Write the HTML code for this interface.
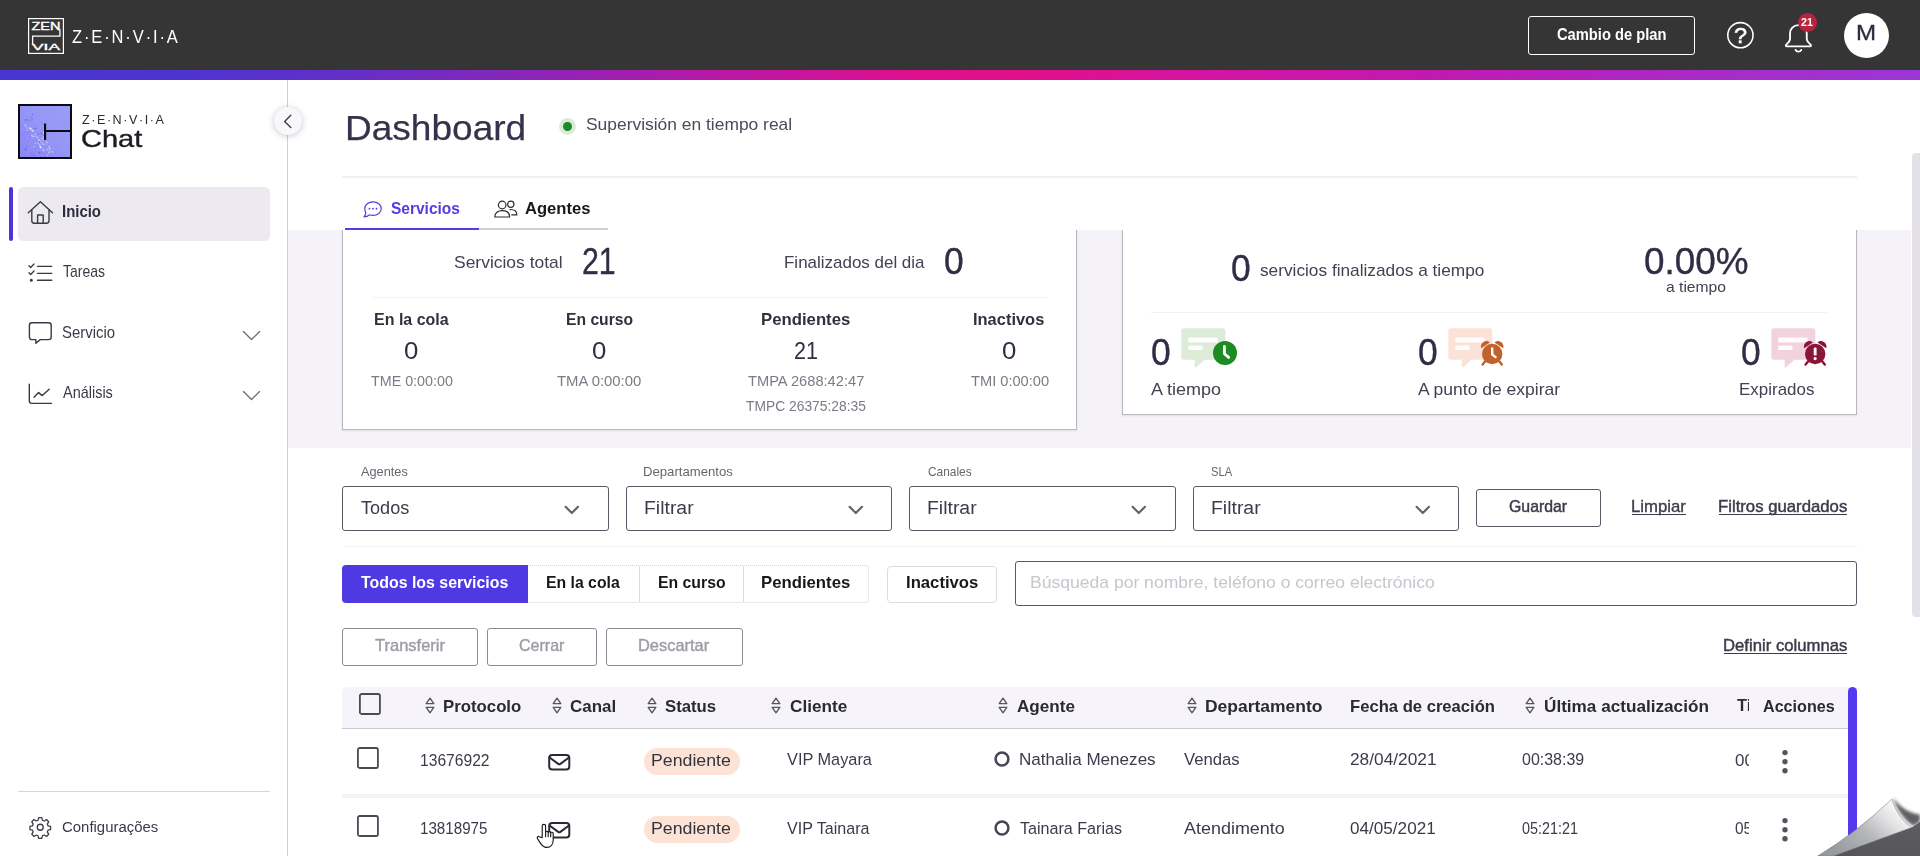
<!DOCTYPE html>
<html lang="es">
<head>
<meta charset="utf-8">
<title>Zenvia Chat - Dashboard</title>
<style>
*{box-sizing:border-box;margin:0;padding:0}
html,body{width:1920px;height:856px;overflow:hidden;background:#fff}
body{font-family:"Liberation Sans",sans-serif;color:#33334a}
#app{position:relative;width:1920px;height:856px;overflow:hidden;background:#fff}
.t{position:absolute;white-space:nowrap;line-height:1;transform-origin:0 0;display:block}
.b{position:absolute}
svg{position:absolute;overflow:visible}
header,aside,main,section,nav{position:absolute;left:0;top:0;width:0;height:0}

</style>
</head>
<body>
<div id="app">
<header>
<div class="b" style="left:0px;top:0px;width:1920px;height:70px;background:#363535"></div>
<div class="b" style="left:0px;top:70px;width:1920px;height:10px;background:linear-gradient(90deg,#4936d2 0%,#4d34d0 9%,#6030c8 17%,#7f28bd 25%,#b21aa8 36%,#dc1090 47%,#e20f8a 53%,#d414a0 62%,#c01ab0 75%,#a92ac6 88%,#9a37d6 100%)"></div>
<svg style="left:28px;top:18px" width="36" height="36" viewBox="0 0 36 36" fill="none" stroke="#fff">
<rect x="0.600" y="0.600" width="34.800" height="34.800" stroke-width="1.200"/>
<path d="M31.900 11v7.100H4.600v8.400" stroke-width="1.300"/>
<text x="3.400" y="11.500" font-family="Liberation Sans, sans-serif" font-size="10.400" fill="#fff" stroke="#fff" stroke-width=".35" textLength="29" lengthAdjust="spacingAndGlyphs">ZEN</text>
<text x="4" y="32.300" font-family="Liberation Sans, sans-serif" font-size="8.800" fill="#fff" stroke="#fff" stroke-width=".35" textLength="28" lengthAdjust="spacingAndGlyphs">VIA</text>
</svg>
<span class="t" style="left:72.00px;top:28.59px;font-size:17.5px;color:#fff;letter-spacing:2px;transform:scaleX(0.9421);">Z·E·N·V·I·A</span>
<div class="b" style="left:1528px;top:16px;width:167px;height:39px;border:1px solid #fff;border-radius:3px"></div>
<span class="t" style="left:1557.00px;top:26.12px;font-size:16.4px;font-weight:700;color:#fff;transform:scaleX(0.8971);">Cambio de plan</span>
<svg style="left:1726px;top:21px" width="29" height="29" viewBox="0 0 29 29" fill="none" stroke="#fff" stroke-width="1.6"><circle cx="14.4" cy="14.2" r="12.6"/></svg>
<span class="t" style="left:1734.46px;top:24.78px;font-size:22px;color:#fff;transform:scaleX(1.0676);-webkit-text-stroke:0.5px #fff;">?</span>
<svg style="left:1783px;top:23px" width="33" height="32" viewBox="0 0 30 32" preserveAspectRatio="none" fill="none" stroke="#fff" stroke-width="1.7" stroke-linecap="round" stroke-linejoin="round">
<path d="M14 2.2c-4.6 0-7.6 3.6-7.6 8.2v5.2c0 2.4-1.6 4.4-3.6 6.2-.5.5-.2 1.6.7 1.6h21c.9 0 1.2-1.1.7-1.6-2-1.800-3.600-3.800-3.600-6.200v-5.200c0-4.600-3-8.200-7.600-8.200z"/>
<path d="M11.400 26.800c.5 1.200 1.500 1.900 2.600 1.900s2.100-.7 2.600-1.900"/>
</svg>
<div class="b" style="left:1797.5px;top:12.5px;width:19.5px;height:19.5px;background:#b8233e;border-radius:50%"></div>
<span class="t" style="left:1801.00px;top:17.29px;font-size:11px;font-weight:700;color:#fff;transform:scaleX(0.9644);">21</span>
<div class="b" style="left:1844px;top:12.7px;width:45px;height:45px;background:#fff;border-radius:50%"></div>
<span class="t" style="left:1855.69px;top:22.00px;font-size:22.2px;color:#2b2b42;transform:scaleX(1.0863);-webkit-text-stroke:0.3px #2b2b42;">M</span>
</header>
<aside>
<div class="b" style="left:287px;top:80px;width:1px;height:776px;background:#d0ced6;z-index:4"></div>
<div class="b" style="left:18px;top:104px;width:54px;height:55px;background:#9595f6;border:2px solid #0c0c10"></div>
<svg style="left:20px;top:106px" width="50" height="51" viewBox="0 0 50 51">
<defs><linearGradient id="lg" x1="0" y1="1" x2="1" y2="0"><stop offset="0" stop-color="#8a86f4"/><stop offset=".5" stop-color="#9595f6"/><stop offset="1" stop-color="#9a9cf8"/></linearGradient></defs>
<rect width="50" height="51" fill="url(#lg)"/>
<rect x="17.5" y="30.6" width="1" height="1.2" fill="#e9f3e2" opacity="0.85" transform="rotate(38 17.5 30.6)"/><rect x="22.9" y="33.9" width="1" height="1" fill="#f3f7e6" opacity="0.55" transform="rotate(38 22.9 33.9)"/><rect x="11.7" y="24.1" width="2.4" height="0.8" fill="#dfeaf5" opacity="0.55" transform="rotate(38 11.7 24.1)"/><rect x="13.9" y="39.9" width="1" height="1.2" fill="#dfeaf5" opacity="0.85" transform="rotate(38 13.9 39.9)"/><rect x="13.0" y="29.0" width="2.4" height="1.2" fill="#dfeaf5" opacity="0.55" transform="rotate(38 13.0 29.0)"/><rect x="19.0" y="32.8" width="2.4" height="1.2" fill="#e9f3e2" opacity="0.55" transform="rotate(38 19.0 32.8)"/><rect x="17.9" y="36.3" width="1.6" height="1" fill="#c4ccff" opacity="0.95" transform="rotate(38 17.9 36.3)"/><rect x="15.7" y="30.1" width="1.2" height="0.8" fill="#c4ccff" opacity="0.85" transform="rotate(38 15.7 30.1)"/><rect x="23.3" y="29.9" width="1.6" height="1.2" fill="#e9f3e2" opacity="0.55" transform="rotate(38 23.3 29.9)"/><rect x="20.8" y="35.2" width="2" height="1" fill="#e9f3e2" opacity="0.55" transform="rotate(38 20.8 35.2)"/><rect x="19.5" y="38.0" width="1.6" height="1" fill="#cfd8ff" opacity="0.95" transform="rotate(38 19.5 38.0)"/><rect x="15.0" y="36.5" width="1.6" height="1" fill="#e9f3e2" opacity="0.55" transform="rotate(38 15.0 36.5)"/><rect x="23.0" y="43.3" width="2" height="1" fill="#f3f7e6" opacity="0.85" transform="rotate(38 23.0 43.3)"/><rect x="5.7" y="18.1" width="1" height="1" fill="#e9f3e2" opacity="0.7" transform="rotate(38 5.7 18.1)"/><rect x="27.1" y="42.5" width="2" height="1" fill="#e9f3e2" opacity="0.7" transform="rotate(38 27.1 42.5)"/><rect x="11.5" y="29.0" width="2" height="1.2" fill="#cfd8ff" opacity="0.95" transform="rotate(38 11.5 29.0)"/><rect x="29.4" y="44.9" width="1.2" height="0.8" fill="#e9f3e2" opacity="0.7" transform="rotate(38 29.4 44.9)"/><rect x="10.4" y="21.3" width="2.4" height="0.8" fill="#cfd8ff" opacity="0.85" transform="rotate(38 10.4 21.3)"/><rect x="4.4" y="18.5" width="2.4" height="1" fill="#dfeaf5" opacity="0.55" transform="rotate(38 4.4 18.5)"/><rect x="23.4" y="25.8" width="2.4" height="1" fill="#f3f7e6" opacity="0.95" transform="rotate(38 23.4 25.8)"/><rect x="13.2" y="29.6" width="1.2" height="0.8" fill="#dfeaf5" opacity="0.95" transform="rotate(38 13.2 29.6)"/><rect x="10.3" y="22.9" width="1" height="1.2" fill="#dfeaf5" opacity="0.55" transform="rotate(38 10.3 22.9)"/><rect x="28.9" y="45.7" width="1.2" height="1.2" fill="#f3f7e6" opacity="0.7" transform="rotate(38 28.9 45.7)"/><rect x="26.4" y="35.5" width="2" height="0.8" fill="#e9f3e2" opacity="0.95" transform="rotate(38 26.4 35.5)"/><rect x="27.2" y="48.5" width="1" height="0.8" fill="#e9f3e2" opacity="0.85" transform="rotate(38 27.2 48.5)"/><rect x="19.9" y="40.6" width="2.4" height="0.8" fill="#dfeaf5" opacity="0.85" transform="rotate(38 19.9 40.6)"/><rect x="9.8" y="21.4" width="2.4" height="1" fill="#e9f3e2" opacity="0.85" transform="rotate(38 9.8 21.4)"/><rect x="22.0" y="31.5" width="1.2" height="1.2" fill="#c4ccff" opacity="0.85" transform="rotate(38 22.0 31.5)"/><rect x="18.0" y="33.3" width="1.2" height="0.8" fill="#f3f7e6" opacity="0.7" transform="rotate(38 18.0 33.3)"/><rect x="6.6" y="23.4" width="1" height="1" fill="#f3f7e6" opacity="0.85" transform="rotate(38 6.6 23.4)"/><rect x="9.3" y="21.3" width="1.6" height="1" fill="#e9f3e2" opacity="0.7" transform="rotate(38 9.3 21.3)"/><rect x="6.6" y="20.7" width="2" height="1.2" fill="#c4ccff" opacity="0.55" transform="rotate(38 6.6 20.7)"/><rect x="15.2" y="27.5" width="1" height="1.2" fill="#e9f3e2" opacity="0.95" transform="rotate(38 15.2 27.5)"/><rect x="25.8" y="37.8" width="1.2" height="1" fill="#cfd8ff" opacity="0.55" transform="rotate(38 25.8 37.8)"/><rect x="29.4" y="41.3" width="2" height="1.2" fill="#e9f3e2" opacity="0.7" transform="rotate(38 29.4 41.3)"/><rect x="12.4" y="23.5" width="2" height="1.2" fill="#dfeaf5" opacity="0.95" transform="rotate(38 12.4 23.5)"/><rect x="20.4" y="40.4" width="1.2" height="0.8" fill="#e9f3e2" opacity="0.55" transform="rotate(38 20.4 40.4)"/><rect x="22.8" y="32.0" width="1.2" height="0.8" fill="#e9f3e2" opacity="0.85" transform="rotate(38 22.8 32.0)"/><rect x="6.7" y="23.6" width="1.6" height="1" fill="#c4ccff" opacity="0.95" transform="rotate(38 6.7 23.6)"/><rect x="31.9" y="44.7" width="2" height="1.2" fill="#c4ccff" opacity="0.95" transform="rotate(38 31.9 44.7)"/><rect x="28.1" y="41.5" width="1.2" height="1.2" fill="#c4ccff" opacity="0.55" transform="rotate(38 28.1 41.5)"/><rect x="28.7" y="40.0" width="1.2" height="0.8" fill="#dfeaf5" opacity="0.95" transform="rotate(38 28.7 40.0)"/><rect x="22.7" y="36.9" width="2.4" height="1.2" fill="#c4ccff" opacity="0.95" transform="rotate(38 22.7 36.9)"/><rect x="29.0" y="43.7" width="1.2" height="0.8" fill="#cfd8ff" opacity="0.55" transform="rotate(38 29.0 43.7)"/><rect x="21.4" y="40.8" width="1" height="1" fill="#cfd8ff" opacity="0.7" transform="rotate(38 21.4 40.8)"/><rect x="19.9" y="39.6" width="2" height="1.2" fill="#dfeaf5" opacity="0.85" transform="rotate(38 19.9 39.6)"/><rect x="12.9" y="22.0" width="1" height="0.8" fill="#6a5ff2" opacity="0.65"/><rect x="6.6" y="40.1" width="0.8" height="1.3" fill="#4d43e6" opacity="0.5"/><rect x="7.1" y="25.5" width="1.4" height="0.8" fill="#7b74f3" opacity="0.65"/><rect x="8.4" y="14.3" width="1.4" height="1" fill="#7b74f3" opacity="0.65"/><rect x="12.0" y="8.2" width="1" height="0.8" fill="#4d43e6" opacity="0.8"/><rect x="14.9" y="21.7" width="1.4" height="1.3" fill="#4d43e6" opacity="0.8"/><rect x="21.9" y="46.3" width="0.8" height="0.8" fill="#5b50ee" opacity="0.65"/><rect x="12.1" y="12.4" width="0.8" height="1" fill="#4d43e6" opacity="0.65"/><rect x="9.7" y="30.2" width="1.4" height="1" fill="#5b50ee" opacity="0.65"/><rect x="6.3" y="23.6" width="0.8" height="1" fill="#5b50ee" opacity="0.8"/><rect x="4.4" y="32.0" width="0.8" height="0.8" fill="#4d43e6" opacity="0.5"/><rect x="12.6" y="29.4" width="1" height="1.3" fill="#6a5ff2" opacity="0.5"/><rect x="4.7" y="13.3" width="1" height="1.3" fill="#4d43e6" opacity="0.8"/><rect x="18.7" y="27.0" width="0.8" height="1" fill="#4d43e6" opacity="0.5"/><rect x="17.5" y="27.7" width="0.8" height="1" fill="#5b50ee" opacity="0.8"/><rect x="20.8" y="26.8" width="1" height="1.3" fill="#4d43e6" opacity="0.8"/><rect x="6.9" y="13.1" width="1.4" height="1.3" fill="#6a5ff2" opacity="0.65"/><rect x="27.7" y="42.5" width="0.8" height="0.8" fill="#4d43e6" opacity="0.65"/><rect x="4.9" y="42.7" width="1.4" height="1.3" fill="#4d43e6" opacity="0.8"/><rect x="7.8" y="25.1" width="0.8" height="1" fill="#7b74f3" opacity="0.5"/><rect x="12.3" y="48.7" width="1.4" height="1" fill="#6a5ff2" opacity="0.5"/><rect x="3.3" y="25.8" width="1.4" height="1.3" fill="#6a5ff2" opacity="0.5"/><rect x="11.6" y="16.2" width="0.8" height="0.8" fill="#7b74f3" opacity="0.8"/><rect x="2.0" y="18.0" width="0.8" height="0.8" fill="#6a5ff2" opacity="0.8"/><rect x="24.5" y="31.4" width="1" height="1.3" fill="#7b74f3" opacity="0.5"/><rect x="10.7" y="10.7" width="1.4" height="1.3" fill="#7b74f3" opacity="0.8"/><rect x="18.8" y="45.9" width="1.4" height="1.3" fill="#5b50ee" opacity="0.8"/><rect x="18.6" y="35.4" width="1.4" height="1.3" fill="#6a5ff2" opacity="0.5"/><rect x="2.5" y="20.6" width="0.8" height="1" fill="#7b74f3" opacity="0.8"/><rect x="2.2" y="28.4" width="0.8" height="1" fill="#4d43e6" opacity="0.5"/><rect x="11.0" y="46.9" width="1.4" height="0.8" fill="#5b50ee" opacity="0.8"/><rect x="11.0" y="13.4" width="1.4" height="1.3" fill="#7b74f3" opacity="0.65"/><rect x="19.2" y="45.9" width="1" height="0.8" fill="#6a5ff2" opacity="0.5"/><rect x="15.6" y="34.0" width="1.4" height="1" fill="#6a5ff2" opacity="0.5"/><rect x="14.0" y="48.7" width="0.8" height="1.3" fill="#6a5ff2" opacity="0.8"/>
<rect x="24" y="17.500" width="2.100" height="16.400" fill="#0c0c10"/><rect x="26" y="24" width="24.500" height="2" fill="#0c0c10"/>
</svg>
<span class="t" style="left:82.30px;top:113.87px;font-size:12.2px;color:#2a2a30;letter-spacing:1.5px;transform:scaleX(1.0314);">Z·E·N·V·I·A</span>
<span class="t" style="left:81.17px;top:127.33px;font-size:24px;color:#1c1c22;transform:scaleX(1.2092);-webkit-text-stroke:0.4px #1c1c22;">Chat</span>
<div class="b" style="left:274px;top:107.4px;width:28px;height:28px;background:#f8f7fa;border-radius:50%;box-shadow:0 1px 6px rgba(40,30,80,.26);z-index:5"></div>
<svg style="left:280px;top:113px;z-index:6" width="16" height="16" viewBox="0 0 16 16" fill="none" stroke="#3c3c48" stroke-width="1.4" stroke-linecap="round" stroke-linejoin="round"><path d="M10.800 2.300L4.600 8.400l6.200 6.100"/></svg>
<div class="b" style="left:9px;top:187px;width:4px;height:54px;background:#4a36d6;border-radius:2px"></div>
<div class="b" style="left:18px;top:187px;width:252px;height:54px;background:#eceaf0;border-radius:5px"></div>
<svg style="left:27px;top:200px" width="27" height="25" viewBox="0 0 27 25" fill="none" stroke="#3a3a46" stroke-width="1.4" stroke-linecap="round" stroke-linejoin="round">
<path d="M1.300 12.800L13.400 1.800l12.100 11"/><path d="M4.800 10.200v10.600c0 1.500.9 2.400 2.400 2.400h12.400c1.500 0 2.400-.9 2.400-2.400V10.200"/><path d="M10.600 23v-8h5.600v8"/></svg>
<span class="t" style="left:61.84px;top:203.22px;font-size:16.4px;font-weight:700;color:#2c2c3a;transform:scaleX(0.9111);">Inicio</span>
<svg style="left:28px;top:263px" width="25" height="20" viewBox="0 0 25 20" fill="none" stroke="#3a3a46" stroke-width="1.350" stroke-linecap="round" stroke-linejoin="round">
<path d="M1 2.800l1.700 1.700L6 1"/><path d="M1 9.800l1.700 1.700L6 8"/><circle cx="3.300" cy="17.200" r=".9" fill="#3a3a46"/>
<path d="M9.500 3.300h14.300M9.500 10.300h14.300M9.500 17.200h14.300"/></svg>
<span class="t" style="left:63.20px;top:263.22px;font-size:16.4px;color:#3a3a48;transform:scaleX(0.8532);">Tareas</span>
<svg style="left:28px;top:321px" width="25" height="24" viewBox="0 0 25 24" fill="none" stroke="#3a3a46" stroke-width="1.400" stroke-linecap="round" stroke-linejoin="round">
<path d="M4 1.800h16.600c1.600 0 2.600 1 2.600 2.600v11.600c0 1.600-1 2.600-2.600 2.600h-8.400l-4.300 3.600v-3.600H4c-1.600 0-2.600-1-2.600-2.600V4.400c0-1.600 1-2.600 2.600-2.600z"/></svg>
<span class="t" style="left:62.32px;top:324.02px;font-size:16.4px;color:#3a3a48;transform:scaleX(0.9092);">Servicio</span>
<svg style="left:242px;top:330px" width="19" height="11" viewBox="0 0 19 11" fill="none" stroke="#6d6d78" stroke-width="1.350" stroke-linecap="round" stroke-linejoin="round"><path d="M1.400 1.600l8.100 8 8.100-8"/></svg>
<svg style="left:28px;top:383px" width="25" height="22" viewBox="0 0 25 22" fill="none" stroke="#3a3a46" stroke-width="1.400" stroke-linecap="round" stroke-linejoin="round">
<path d="M1.300 1.200v16.600c0 1.700.9 2.600 2.600 2.600h19.600"/><path d="M6 14.200l4.600-4.600 3.600 3 7-6.400"/></svg>
<span class="t" style="left:63.20px;top:383.92px;font-size:16.4px;color:#3a3a48;transform:scaleX(0.8828);">Análisis</span>
<svg style="left:242px;top:390px" width="19" height="11" viewBox="0 0 19 11" fill="none" stroke="#6d6d78" stroke-width="1.350" stroke-linecap="round" stroke-linejoin="round"><path d="M1.400 1.600l8.100 8 8.100-8"/></svg>
<div class="b" style="left:18px;top:790.5px;width:252px;height:1px;background:#d6d4de"></div>
<svg style="left:29px;top:816px" width="22.500" height="22.500" viewBox="0 0 24 24" fill="none" stroke="#3a3a46" stroke-width="1.350" stroke-linecap="round" stroke-linejoin="round">
<circle cx="12" cy="12" r="3.200"/>
<path d="M10.300 1.800h3.400l.6 2.700 1.900.8 2.400-1.500 2.400 2.400-1.500 2.400.8 1.900 2.700.6v3.400l-2.700.6-.8 1.900 1.500 2.400-2.400 2.400-2.400-1.500-1.900.8-.6 2.700h-3.400l-.6-2.700-1.900-.8-2.400 1.500-2.400-2.400 1.500-2.400-.8-1.900-2.700-.6v-3.400l2.700-.6.8-1.900-1.500-2.400 2.400-2.400 2.400 1.500 1.900-.8z"/></svg>
<span class="t" style="left:62.24px;top:818.86px;font-size:15.4px;color:#3a3a48;transform:scaleX(0.9697);">Configurações</span>
</aside>
<main>
<div class="b" style="left:288px;top:230px;width:1623px;height:217.5px;background:#f5f3f8"></div>
<div class="b" style="left:342px;top:214px;width:735px;height:216px;background:#fff;border:1px solid #b9b8c1;box-shadow:0 1px 2px rgba(40,40,60,.10)"></div>
<span class="t" style="left:454.24px;top:253.51px;font-size:17px;color:#424253;transform:scaleX(1.0266);">Servicios total</span>
<span class="t" style="left:582.42px;top:243.94px;font-size:36.2px;color:#2e2e45;transform:scaleX(0.8367);-webkit-text-stroke:0.35px #2e2e45;">21</span>
<span class="t" style="left:783.61px;top:253.51px;font-size:17px;color:#424253;transform:scaleX(0.9978);">Finalizados del dia</span>
<span class="t" style="left:944.08px;top:243.94px;font-size:36.2px;color:#2e2e45;transform:scaleX(0.9764);-webkit-text-stroke:0.35px #2e2e45;">0</span>
<div class="b" style="left:372.5px;top:297px;width:675.5px;height:1.2px;background:#f3f1f6"></div>
<span class="t" style="left:373.85px;top:311.75px;font-size:16.6px;font-weight:700;color:#30303f;transform:scaleX(0.9640);">En la cola</span>
<span class="t" style="left:404.15px;top:338.98px;font-size:24.6px;color:#2e2e45;transform:scaleX(1.0482);">0</span>
<span class="t" style="left:371.00px;top:373.67px;font-size:14.8px;color:#7b7b86;transform:scaleX(0.9666);">TME 0:00:00</span>
<span class="t" style="left:565.86px;top:311.75px;font-size:16.6px;font-weight:700;color:#30303f;transform:scaleX(0.9447);">En curso</span>
<span class="t" style="left:591.94px;top:338.98px;font-size:24.6px;color:#2e2e45;transform:scaleX(1.0482);">0</span>
<span class="t" style="left:557.00px;top:373.67px;font-size:14.8px;color:#7b7b86;transform:scaleX(1.0046);">TMA 0:00:00</span>
<span class="t" style="left:761.47px;top:311.75px;font-size:16.6px;font-weight:700;color:#30303f;transform:scaleX(1.0088);">Pendientes</span>
<span class="t" style="left:794.09px;top:338.98px;font-size:24.6px;color:#2e2e45;transform:scaleX(0.8767);">21</span>
<span class="t" style="left:748.30px;top:373.67px;font-size:14.8px;color:#7b7b86;transform:scaleX(0.9912);">TMPA 2688:42:47</span>
<span class="t" style="left:973.42px;top:311.75px;font-size:16.6px;font-weight:700;color:#30303f;transform:scaleX(0.9910);">Inactivos</span>
<span class="t" style="left:1001.94px;top:338.98px;font-size:24.6px;color:#2e2e45;transform:scaleX(1.0482);">0</span>
<span class="t" style="left:970.70px;top:373.67px;font-size:14.8px;color:#7b7b86;transform:scaleX(0.9889);">TMI 0:00:00</span>
<span class="t" style="left:746.30px;top:398.87px;font-size:14.8px;color:#7b7b86;transform:scaleX(0.9350);">TMPC 26375:28:35</span>
<div class="b" style="left:1122px;top:214px;width:735px;height:201px;background:#fff;border:1px solid #b9b8c1;box-shadow:0 1px 2px rgba(40,40,60,.10)"></div>
<span class="t" style="left:1230.55px;top:251.14px;font-size:36.2px;color:#2e2e45;transform:scaleX(0.9764);-webkit-text-stroke:0.35px #2e2e45;">0</span>
<span class="t" style="left:1260.23px;top:262.21px;font-size:17px;color:#424253;transform:scaleX(1.0146);">servicios finalizados a tiempo</span>
<span class="t" style="left:1644.29px;top:243.94px;font-size:36.2px;color:#2e2e45;transform:scaleX(1.0189);-webkit-text-stroke:0.35px #2e2e45;">0.00%</span>
<span class="t" style="left:1666.29px;top:278.90px;font-size:15px;color:#424253;transform:scaleX(1.0425);">a tiempo</span>
<div class="b" style="left:1150.6px;top:312.3px;width:676.4px;height:1.2px;background:#f3f1f6"></div>
<span class="t" style="left:1151.08px;top:334.54px;font-size:36.2px;color:#2e2e45;transform:scaleX(0.9764);-webkit-text-stroke:0.35px #2e2e45;">0</span>
<svg style="left:1181px;top:328px" width="46" height="41" viewBox="0 0 46 41">
<path d="M3 0.300h38.600c1.700 0 2.700 1 2.700 2.700v26c0 1.700-1 2.700-2.700 2.700H23.500l-8.300 7.600c-.7.600-1.500.300-1.500-.6v-7H3c-1.700 0-2.700-1-2.700-2.700V3c0-1.700 1-2.700 2.700-2.700z" fill="#dcecd9"/>
<rect x="7.200" y="9.600" width="29.500" height="5" rx="1.200" fill="#fff" opacity=".9"/><rect x="7.200" y="17.400" width="14.300" height="4.500" rx="1.200" fill="#fff" opacity=".9"/></svg>
<svg style="left:1213px;top:340.800px" width="24" height="24" viewBox="0 0 24 24"><circle cx="12" cy="12" r="12" fill="#1e8a23"/><path d="M11.400 5.500v7.200l4.300 3.700" fill="none" stroke="#fff" stroke-width="2.800" stroke-linecap="round" stroke-linejoin="round"/></svg>
<span class="t" style="left:1151.00px;top:381.11px;font-size:17px;color:#424253;transform:scaleX(1.0582);">A tiempo</span>
<span class="t" style="left:1418.18px;top:334.54px;font-size:36.2px;color:#2e2e45;transform:scaleX(0.9764);-webkit-text-stroke:0.35px #2e2e45;">0</span>
<svg style="left:1448px;top:328px" width="46" height="41" viewBox="0 0 46 41">
<path d="M3 0.300h38.600c1.700 0 2.700 1 2.700 2.700v26c0 1.700-1 2.700-2.700 2.700H23.500l-8.300 7.600c-.7.600-1.500.300-1.500-.6v-7H3c-1.700 0-2.700-1-2.700-2.700V3c0-1.700 1-2.700 2.700-2.700z" fill="#fbe2d7"/>
<rect x="7.200" y="9.600" width="29.500" height="5" rx="1.200" fill="#fff" opacity=".9"/><rect x="7.200" y="17.400" width="14.300" height="4.500" rx="1.200" fill="#fff" opacity=".9"/></svg>
<svg style="left:1480px;top:340px" width="25" height="26" viewBox="0 0 25 26">
<circle cx="12.200" cy="14" r="10.200" fill="#c1622e"/>
<path d="M1.200 8.200C.2 5.200 2 2 5.200 1.200 7 .8 8.700 1.400 9.900 2.500z" fill="#c1622e"/><path d="M23.200 8.200c1-3-.8-6.200-4-7-1.800-.4-3.500.2-4.700 1.300z" fill="#c1622e"/>
<path d="M5.200 21.200l-2.600 3.400M19.200 21.200l2.600 3.400" stroke="#c1622e" stroke-width="2.400" stroke-linecap="round"/>
<path d="M12.200 8.500v6l3.400 2.600" fill="none" stroke="#fff" stroke-width="2.400" stroke-linecap="round" stroke-linejoin="round"/></svg>
<span class="t" style="left:1418.00px;top:381.11px;font-size:17px;color:#424253;transform:scaleX(1.0295);">A punto de expirar</span>
<span class="t" style="left:1740.55px;top:334.54px;font-size:36.2px;color:#2e2e45;transform:scaleX(0.9746);-webkit-text-stroke:0.35px #2e2e45;">0</span>
<svg style="left:1771px;top:328px" width="46" height="41" viewBox="0 0 46 41">
<path d="M3 0.300h38.600c1.700 0 2.700 1 2.700 2.700v26c0 1.700-1 2.700-2.700 2.700H23.500l-8.300 7.600c-.7.600-1.500.300-1.500-.6v-7H3c-1.700 0-2.700-1-2.700-2.700V3c0-1.700 1-2.700 2.700-2.700z" fill="#f3d2df"/>
<rect x="7.200" y="9.600" width="29.500" height="5" rx="1.200" fill="#fff" opacity=".9"/><rect x="7.200" y="17.400" width="14.300" height="4.500" rx="1.200" fill="#fff" opacity=".9"/></svg>
<svg style="left:1802.5px;top:340px" width="25" height="26" viewBox="0 0 25 26">
<circle cx="12.200" cy="14" r="10.200" fill="#8b1538"/>
<path d="M1.200 8.200C.2 5.200 2 2 5.200 1.200 7 .8 8.700 1.400 9.900 2.500z" fill="#8b1538"/><path d="M23.200 8.200c1-3-.8-6.200-4-7-1.800-.4-3.500.2-4.700 1.300z" fill="#8b1538"/>
<path d="M5.200 21.200l-2.600 3.400M19.200 21.200l2.600 3.400" stroke="#8b1538" stroke-width="2.400" stroke-linecap="round"/>
<rect x="10.700" y="7.600" width="2.900" height="8" rx="1.200" fill="#fff"/><circle cx="12.150" cy="18.600" r="1.600" fill="#fff"/></svg>
<span class="t" style="left:1739.01px;top:381.11px;font-size:17px;color:#424253;transform:scaleX(0.9974);">Expirados</span>
<div class="b" style="left:288px;top:80px;width:1623px;height:150px;background:#fff"></div>
<span class="t" style="left:345.21px;top:110.41px;font-size:35.2px;color:#34334b;transform:scaleX(1.0525);-webkit-text-stroke:0.25px #34334b;">Dashboard</span>
<div class="b" style="left:559px;top:117.6px;width:17.2px;height:17.2px;background:#dcebd9;border-radius:50%"></div>
<div class="b" style="left:563.1px;top:121.8px;width:8.8px;height:8.8px;background:#1f8a25;border-radius:50%"></div>
<span class="t" style="left:586.08px;top:116.95px;font-size:16.6px;color:#4a4a5c;transform:scaleX(1.0493);">Supervisión en tiempo real</span>
<div class="b" style="left:342px;top:176.2px;width:1515px;height:1.4px;background:#f2eff5"></div>
<svg style="left:363px;top:201px" width="19" height="17" viewBox="0 0 19 17" fill="none" stroke="#523ce4" stroke-width="1.200" stroke-linecap="round" stroke-linejoin="round">
<path d="M10 .8c4.600 0 8.200 3 8.200 6.800s-3.600 6.800-8.200 6.800c-1.300 0-2.500-.2-3.600-.6-1.300 1.300-3.200 2-5.400 2 1.200-1.200 1.800-2.600 1.800-4C2.200 10.600 1.800 9.200 1.800 7.600 1.800 3.800 5.400.8 10 .8z"/>
<circle cx="6.500" cy="7.700" r=".9" fill="#523ce4" stroke="none"/><circle cx="10" cy="7.700" r=".9" fill="#523ce4" stroke="none"/><circle cx="13.500" cy="7.700" r=".9" fill="#523ce4" stroke="none"/></svg>
<span class="t" style="left:391.00px;top:200.78px;font-size:16.8px;font-weight:700;color:#523ce4;transform:scaleX(0.9235);">Servicios</span>
<svg style="left:494px;top:200px" width="24" height="18" viewBox="0 0 24 18" fill="none" stroke="#2a2a34" stroke-width="1.200" stroke-linecap="round" stroke-linejoin="round">
<circle cx="8.200" cy="5" r="3.800"/><path d="M.8 17c0-4.200 3-6.400 7.400-6.400s7.400 2.200 7.400 6.400z"/>
<circle cx="16.800" cy="4.200" r="3.100"/><path d="M16 9.600c.3 0 .6-.1.800-.1 3.600 0 6 1.800 6 5.400h-5"/></svg>
<span class="t" style="left:524.80px;top:200.78px;font-size:16.8px;font-weight:700;color:#17171c;transform:scaleX(0.9881);">Agentes</span>
<div class="b" style="left:345px;top:227.6px;width:134px;height:2.4px;background:#523ce4"></div>
<div class="b" style="left:479px;top:227.8px;width:129px;height:2px;background:#d2cfd9"></div>
<span class="t" style="left:361.00px;top:465.76px;font-size:12.8px;color:#66666f;transform:scaleX(0.9964);">Agentes</span>
<div class="b" style="left:342px;top:486px;width:267px;height:45px;border:1px solid #5a5a66;border-radius:3px;background:#fff"></div>
<span class="t" style="left:361.00px;top:498.66px;font-size:18px;color:#3b3b4a;transform:scaleX(1.0056);">Todos</span>
<svg style="left:563.5px;top:505px" width="16" height="10" viewBox="0 0 16 10" fill="none" stroke="#64646e" stroke-width="2.200" stroke-linecap="round" stroke-linejoin="round"><path d="M1.600 1.800l6.200 6.200 6.200-6.200"/></svg>
<span class="t" style="left:643.09px;top:465.76px;font-size:12.8px;color:#66666f;transform:scaleX(1.0274);">Departamentos</span>
<div class="b" style="left:626px;top:486px;width:266px;height:45px;border:1px solid #5a5a66;border-radius:3px;background:#fff"></div>
<span class="t" style="left:644.02px;top:498.66px;font-size:18px;color:#3b3b4a;transform:scaleX(1.0786);">Filtrar</span>
<svg style="left:847.5px;top:505px" width="16" height="10" viewBox="0 0 16 10" fill="none" stroke="#64646e" stroke-width="2.200" stroke-linecap="round" stroke-linejoin="round"><path d="M1.600 1.800l6.200 6.200 6.200-6.200"/></svg>
<span class="t" style="left:927.70px;top:465.76px;font-size:12.8px;color:#66666f;transform:scaleX(0.9290);">Canales</span>
<div class="b" style="left:909px;top:486px;width:267px;height:45px;border:1px solid #5a5a66;border-radius:3px;background:#fff"></div>
<span class="t" style="left:927.02px;top:498.66px;font-size:18px;color:#3b3b4a;transform:scaleX(1.0786);">Filtrar</span>
<svg style="left:1130.5px;top:505px" width="16" height="10" viewBox="0 0 16 10" fill="none" stroke="#64646e" stroke-width="2.200" stroke-linecap="round" stroke-linejoin="round"><path d="M1.600 1.800l6.200 6.200 6.200-6.200"/></svg>
<span class="t" style="left:1210.89px;top:465.76px;font-size:12.8px;color:#66666f;transform:scaleX(0.8742);">SLA</span>
<div class="b" style="left:1193px;top:486px;width:266px;height:45px;border:1px solid #5a5a66;border-radius:3px;background:#fff"></div>
<span class="t" style="left:1211.02px;top:498.66px;font-size:18px;color:#3b3b4a;transform:scaleX(1.0786);">Filtrar</span>
<svg style="left:1414.5px;top:505px" width="16" height="10" viewBox="0 0 16 10" fill="none" stroke="#64646e" stroke-width="2.200" stroke-linecap="round" stroke-linejoin="round"><path d="M1.600 1.800l6.200 6.200 6.200-6.200"/></svg>
<div class="b" style="left:1476.4px;top:489.2px;width:124.3px;height:37.5px;border:1px solid #5a5a66;border-radius:3px;background:#fff"></div>
<span class="t" style="left:1509.21px;top:497.86px;font-size:16.4px;color:#3b3b4a;transform:scaleX(0.9664);-webkit-text-stroke:0.45px #3b3b4a;">Guardar</span>
<span class="t" style="left:1631.04px;top:497.92px;font-size:16.4px;color:#3b3b4a;transform:scaleX(1.0200);-webkit-text-stroke:0.35px #3b3b4a;">Limpiar</span>
<div class="b" style="left:1632px;top:514.2px;width:54.4px;height:1.2px;background:#3b3b4a"></div>
<span class="t" style="left:1717.65px;top:497.89px;font-size:16.4px;color:#3b3b4a;transform:scaleX(1.0206);-webkit-text-stroke:0.45px #3b3b4a;">Filtros guardados</span>
<div class="b" style="left:1718.8px;top:514.2px;width:128.2px;height:1.2px;background:#3b3b4a"></div>
<div class="b" style="left:344px;top:546px;width:1513px;height:1.2px;background:#f5f3f7"></div>
<div class="b" style="left:342.2px;top:565.3px;width:185.6px;height:37.5px;background:#4f39e3;border-radius:4px 0 0 4px"></div>
<div class="b" style="left:527.8px;top:565.3px;width:341px;height:37.5px;border:1px dotted #d4d2da;border-left:none;border-radius:0 3px 3px 0"></div>
<div class="b" style="left:639px;top:566px;width:1px;height:36px;background:#dddbe2"></div>
<div class="b" style="left:743px;top:566px;width:1px;height:36px;background:#dddbe2"></div>
<span class="t" style="left:361.00px;top:574.21px;font-size:17px;font-weight:700;color:#fff;transform:scaleX(0.9355);">Todos los servicios</span>
<span class="t" style="left:545.66px;top:574.21px;font-size:17px;font-weight:700;color:#17171c;transform:scaleX(0.9288);">En la cola</span>
<span class="t" style="left:657.67px;top:574.21px;font-size:17px;font-weight:700;color:#17171c;transform:scaleX(0.9287);">En curso</span>
<span class="t" style="left:761.47px;top:574.21px;font-size:17px;font-weight:700;color:#17171c;transform:scaleX(0.9842);">Pendientes</span>
<div class="b" style="left:887.4px;top:565.5px;width:109.2px;height:37px;border:1px solid #dddbe2;border-radius:4px"></div>
<span class="t" style="left:906.07px;top:574.21px;font-size:17px;font-weight:700;color:#17171c;transform:scaleX(0.9812);">Inactivos</span>
<div class="b" style="left:1015px;top:561px;width:842px;height:45px;border:1px solid #5a5a66;border-radius:3px;background:#fff"></div>
<span class="t" style="left:1030.03px;top:573.61px;font-size:17px;color:#c6c6ce;transform:scaleX(1.0320);">Búsqueda por nombre, teléfono o correo electrónico</span>
<div class="b" style="left:342px;top:628px;width:135.8px;height:37.5px;border:1px solid #8a8a94;border-radius:3px;background:#fff"></div>
<span class="t" style="left:375.00px;top:637.32px;font-size:16.4px;color:#9c9ca4;transform:scaleX(1.0063);-webkit-text-stroke:0.4px #9c9ca4;">Transferir</span>
<div class="b" style="left:487px;top:628px;width:109.60000000000002px;height:37.5px;border:1px solid #8a8a94;border-radius:3px;background:#fff"></div>
<span class="t" style="left:518.64px;top:637.32px;font-size:16.4px;color:#9c9ca4;transform:scaleX(0.9786);-webkit-text-stroke:0.4px #9c9ca4;">Cerrar</span>
<div class="b" style="left:606.3px;top:628px;width:136.30000000000007px;height:37.5px;border:1px solid #8a8a94;border-radius:3px;background:#fff"></div>
<span class="t" style="left:638.31px;top:637.32px;font-size:16.4px;color:#9c9ca4;transform:scaleX(1.0024);-webkit-text-stroke:0.4px #9c9ca4;">Descartar</span>
<span class="t" style="left:1723.21px;top:637.42px;font-size:16.4px;color:#3b3b4a;transform:scaleX(1.0190);-webkit-text-stroke:0.45px #3b3b4a;">Definir columnas</span>
<div class="b" style="left:1723.7px;top:653px;width:123.3px;height:1.2px;background:#3b3b4a"></div>
<div class="b" style="left:342px;top:687.2px;width:1507px;height:41.3px;background:#f6f4fa;border-radius:5px 0 0 0"></div>
<div class="b" style="left:342px;top:728px;width:1507px;height:1px;background:#cbc9d1"></div>
<div class="b" style="left:342px;top:794px;width:1507px;height:4px;background:#f4f2f8"></div>
<div class="b" style="left:1848px;top:687.2px;width:9px;height:170px;background:#5539ee;border-radius:4.500px 4.500px 0 0"></div>
<svg style="left:358px;top:691.700px" width="24" height="24" viewBox="0 0 24 24" fill="none" stroke="#4a4a55" stroke-width="1.800"><rect x="1.900" y="2" width="20" height="20" rx="1.800"/></svg>
<span class="t" style="left:442.87px;top:698.95px;font-size:16.6px;font-weight:700;color:#2a2a36;transform:scaleX(1.0109);">Protocolo</span>
<svg style="left:425px;top:696.500px" width="10" height="17" viewBox="0 0 10 17" fill="none" stroke="#55555e" stroke-width="1.350" stroke-linejoin="round"><path d="M5 1.200L8.800 6.600H1.200z"/><path d="M5 15.800L8.800 10.400H1.200z"/></svg>
<span class="t" style="left:570.29px;top:698.95px;font-size:16.6px;font-weight:700;color:#2a2a36;transform:scaleX(1.0205);">Canal</span>
<svg style="left:552px;top:696.500px" width="10" height="17" viewBox="0 0 10 17" fill="none" stroke="#55555e" stroke-width="1.350" stroke-linejoin="round"><path d="M5 1.200L8.800 6.600H1.200z"/><path d="M5 15.800L8.800 10.400H1.200z"/></svg>
<span class="t" style="left:665.35px;top:698.95px;font-size:16.6px;font-weight:700;color:#2a2a36;transform:scaleX(1.0088);">Status</span>
<svg style="left:647.3px;top:696.500px" width="10" height="17" viewBox="0 0 10 17" fill="none" stroke="#55555e" stroke-width="1.350" stroke-linejoin="round"><path d="M5 1.200L8.800 6.600H1.200z"/><path d="M5 15.800L8.800 10.400H1.200z"/></svg>
<span class="t" style="left:790.03px;top:698.95px;font-size:16.6px;font-weight:700;color:#2a2a36;transform:scaleX(1.0350);">Cliente</span>
<svg style="left:771.2px;top:696.500px" width="10" height="17" viewBox="0 0 10 17" fill="none" stroke="#55555e" stroke-width="1.350" stroke-linejoin="round"><path d="M5 1.200L8.800 6.600H1.200z"/><path d="M5 15.800L8.800 10.400H1.200z"/></svg>
<span class="t" style="left:1017.00px;top:698.95px;font-size:16.6px;font-weight:700;color:#2a2a36;transform:scaleX(1.0291);">Agente</span>
<svg style="left:998.3px;top:696.500px" width="10" height="17" viewBox="0 0 10 17" fill="none" stroke="#55555e" stroke-width="1.350" stroke-linejoin="round"><path d="M5 1.200L8.800 6.600H1.200z"/><path d="M5 15.800L8.800 10.400H1.200z"/></svg>
<span class="t" style="left:1204.59px;top:698.95px;font-size:16.6px;font-weight:700;color:#2a2a36;transform:scaleX(1.0529);">Departamento</span>
<svg style="left:1187.4px;top:696.500px" width="10" height="17" viewBox="0 0 10 17" fill="none" stroke="#55555e" stroke-width="1.350" stroke-linejoin="round"><path d="M5 1.200L8.800 6.600H1.200z"/><path d="M5 15.800L8.800 10.400H1.200z"/></svg>
<span class="t" style="left:1349.80px;top:698.95px;font-size:16.6px;font-weight:700;color:#2a2a36;transform:scaleX(1.0014);">Fecha de creación</span>
<span class="t" style="left:1543.67px;top:698.95px;font-size:16.6px;font-weight:700;color:#2a2a36;transform:scaleX(1.0334);">Última actualización</span>
<svg style="left:1525.4px;top:696.500px" width="10" height="17" viewBox="0 0 10 17" fill="none" stroke="#55555e" stroke-width="1.350" stroke-linejoin="round"><path d="M5 1.200L8.800 6.600H1.200z"/><path d="M5 15.800L8.800 10.400H1.200z"/></svg>
<span class="t" style="left:1763.30px;top:698.95px;font-size:16.6px;font-weight:700;color:#2a2a36;transform:scaleX(0.9720);">Acciones</span>
<div class="b" style="left:1730px;top:690px;width:19.200px;height:166px;overflow:hidden">
<span class="t" style="left:6.60px;top:8.35px;font-size:16.6px;font-weight:700;color:#2a2a36;transform:scaleX(0.9877);">Tiempo</span>
<span class="t" style="left:5.40px;top:61.81px;font-size:17px;color:#3b3b4a;transform:scaleX(0.9974);">00:38:39</span>
<span class="t" style="left:5.40px;top:130.01px;font-size:17px;color:#3b3b4a;transform:scaleX(0.9067);">05:21:21</span>
</div>
<svg style="left:356px;top:745.6px" width="24" height="24" viewBox="0 0 24 24" fill="#fff" stroke="#4a4a55" stroke-width="1.800"><rect x="1.900" y="2" width="20" height="20" rx="1.800"/></svg>
<span class="t" style="left:420.20px;top:752.78px;font-size:16.8px;color:#3b3b4a;transform:scaleX(0.9315);">13676922</span>
<svg style="left:547px;top:753.0px" width="25" height="19" viewBox="0 0 25 19" fill="none" stroke="#2a2a36" stroke-width="2" stroke-linecap="round" stroke-linejoin="round"><rect x="2.200" y="1.900" width="20.100" height="14.600" rx="3"/><path d="M2.900 4.800l8.300 6.100c.7.500 1.500.5 2.200 0l8.300-6.100"/></svg>
<div class="b" style="left:643.5px;top:748.1px;width:96.3px;height:26.7px;background:#fde3d6;border-radius:13.400px"></div>
<span class="t" style="left:651.02px;top:752.78px;font-size:16.8px;color:#33333f;transform:scaleX(1.0571);">Pendiente</span>
<span class="t" style="left:786.70px;top:752.38px;font-size:16.8px;color:#3b3b4a;transform:scaleX(0.9718);">VIP Mayara</span>
<svg style="left:993px;top:750.2px" width="18" height="18" viewBox="0 0 18 18" fill="none" stroke="#464657" stroke-width="2.500"><circle cx="9" cy="9" r="6.400"/></svg>
<span class="t" style="left:1019.05px;top:752.38px;font-size:16.8px;color:#3b3b4a;transform:scaleX(1.0174);">Nathalia Menezes</span>
<span class="t" style="left:1183.80px;top:752.38px;font-size:16.8px;color:#3b3b4a;transform:scaleX(0.9943);">Vendas</span>
<span class="t" style="left:1349.71px;top:752.38px;font-size:16.8px;color:#3b3b4a;transform:scaleX(1.0298);">28/04/2021</span>
<span class="t" style="left:1521.90px;top:752.38px;font-size:16.8px;color:#3b3b4a;transform:scaleX(0.9526);">00:38:39</span>
<svg style="left:1781px;top:749.0px" width="8" height="26" viewBox="0 0 8 26" fill="#55555f"><circle cx="4" cy="3.600" r="2.700"/><circle cx="4" cy="12.700" r="2.700"/><circle cx="4" cy="21.800" r="2.700"/></svg>
<svg style="left:356px;top:813.9px" width="24" height="24" viewBox="0 0 24 24" fill="#fff" stroke="#4a4a55" stroke-width="1.800"><rect x="1.900" y="2" width="20" height="20" rx="1.800"/></svg>
<span class="t" style="left:420.23px;top:821.38px;font-size:16.8px;color:#3b3b4a;transform:scaleX(0.9038);">13818975</span>
<svg style="left:547px;top:821.3px" width="25" height="19" viewBox="0 0 25 19" fill="none" stroke="#2a2a36" stroke-width="2" stroke-linecap="round" stroke-linejoin="round"><rect x="2.200" y="1.900" width="20.100" height="14.600" rx="3"/><path d="M2.900 4.800l8.300 6.100c.7.500 1.500.5 2.200 0l8.300-6.100"/></svg>
<div class="b" style="left:643.5px;top:816.4px;width:96.3px;height:26.7px;background:#fde3d6;border-radius:13.400px"></div>
<span class="t" style="left:651.02px;top:821.18px;font-size:16.8px;color:#33333f;transform:scaleX(1.0571);">Pendiente</span>
<span class="t" style="left:786.70px;top:820.58px;font-size:16.8px;color:#3b3b4a;transform:scaleX(0.9578);">VIP Tainara</span>
<svg style="left:993px;top:818.5px" width="18" height="18" viewBox="0 0 18 18" fill="none" stroke="#464657" stroke-width="2.500"><circle cx="9" cy="9" r="6.400"/></svg>
<span class="t" style="left:1019.69px;top:820.58px;font-size:16.8px;color:#3b3b4a;transform:scaleX(0.9596);">Tainara Farias</span>
<span class="t" style="left:1183.80px;top:820.58px;font-size:16.8px;color:#3b3b4a;transform:scaleX(1.0692);">Atendimento</span>
<span class="t" style="left:1350.00px;top:820.58px;font-size:16.8px;color:#3b3b4a;transform:scaleX(1.0203);">04/05/2021</span>
<span class="t" style="left:1521.90px;top:820.58px;font-size:16.8px;color:#3b3b4a;transform:scaleX(0.8578);">05:21:21</span>
<svg style="left:1781px;top:817.3px" width="8" height="26" viewBox="0 0 8 26" fill="#55555f"><circle cx="4" cy="3.600" r="2.700"/><circle cx="4" cy="12.700" r="2.700"/><circle cx="4" cy="21.800" r="2.700"/></svg>
<svg style="left:536px;top:823px" width="21" height="27" viewBox="0 0 21 27" fill="#fff" stroke="#111" stroke-width="1.100" stroke-linejoin="round" stroke-linecap="round">
<path d="M6.200 14.800V3.100a1.700 1.700 0 0 1 3.400 0V9.200c0-1.300 2.600-1.300 2.600.2 0-1.100 2.500-1 2.500.4 0-.9 2.500-.8 2.500.8V17c0 4.200-2.500 7.400-6.600 7.400-3.200 0-4.700-1.800-6.400-4.500l-2.800-4.400c-.8-1.300.6-2.600 1.900-1.800z"/>
<path d="M9.600 9.200v4.600M12.200 9.600v4.200M14.700 10v3.800" fill="none"/></svg>
<div class="b" style="left:1911px;top:80px;width:9px;height:776px;background:#fff"></div>
<div class="b" style="left:1911.5px;top:153px;width:8.5px;height:464px;background:#e3e0e8;border-radius:4px 0 0 4px"></div>
<svg style="left:1800px;top:780px" width="120" height="76" viewBox="0 0 120 76">
<defs><linearGradient id="cg" gradientUnits="userSpaceOnUse" x1="92" y1="19" x2="40" y2="76"><stop offset="0" stop-color="#fbfbfb"/><stop offset=".22" stop-color="#e4e4e6"/><stop offset=".55" stop-color="#b4b6ba"/><stop offset="1" stop-color="#989a9f"/></linearGradient>
<linearGradient id="cg2" x1="0" y1="0" x2="0" y2="1"><stop offset="0" stop-color="#5e5e61"/><stop offset="1" stop-color="#565659"/></linearGradient>
<filter id="cb" x="-30%" y="-30%" width="160%" height="160%"><feGaussianBlur stdDeviation="1.700"/></filter></defs>
<path d="M93 17.500c2.500 9 9 21 20.500 28.500l6.500-4.500v-7c-10-1-20-7-27-17z" fill="#1e1e20" opacity=".7" filter="url(#cb)"/>
<path d="M25 76L100 44.500 111.800 47.500 120 41.700V76z" fill="url(#cg2)"/>
<path d="M91.800 19.100Q56.500 52.500 17.700 76h16L111.800 47.500C103 42 96 32 91.800 19.100z" fill="url(#cg)" stroke="#6d6e72" stroke-width=".5"/>
</svg>
</main>
</div>
</body>
</html>
